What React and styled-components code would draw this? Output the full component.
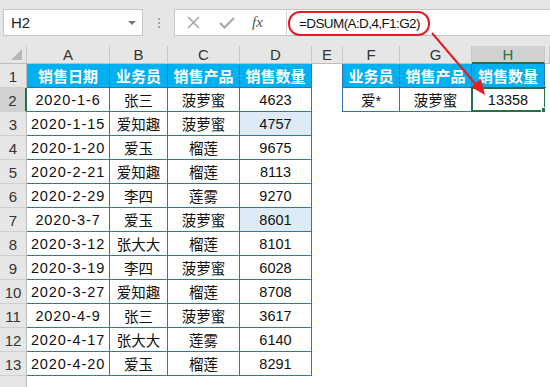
import styled, { createGlobalStyle } from "styled-components";

const GlobalStyle = createGlobalStyle`
  body {
    margin: 0;
    background: #ffffff;
    font-family: "Liberation Sans", "Noto Sans CJK SC", sans-serif;
  }
`;

const BLUE = "#2e75b6";
const GREEN = "#217346";

const Sheet = styled.div`
  position: relative;
  width: 550px;
  height: 387px;
  overflow: hidden;
  background: #ffffff;
`;

const Toolbar = styled.div`
  height: 46px;
  box-sizing: border-box;
  padding: 9px 0 0 3px;
  display: flex;
  align-items: flex-start;
  background: #e6e6e6;
`;

const NameBox = styled.div`
  width: 140px;
  height: 27px;
  box-sizing: border-box;
  border: 1px solid #c6c6c6;
  background: #fff;
  display: flex;
  align-items: center;
  justify-content: space-between;
  padding: 0 6px 0 7px;
  font-size: 15px;
  color: #222;
`;

const DropArrow = styled.span`
  width: 0;
  height: 0;
  border-left: 4px solid transparent;
  border-right: 4px solid transparent;
  border-top: 4px solid #777;
`;

const Dots = styled.div`
  width: 31px;
  height: 27px;
  display: flex;
  flex-direction: column;
  align-items: center;
  justify-content: center;
  gap: 2px;

  span {
    width: 2px;
    height: 2px;
    background: #a6a6a6;
  }
`;

const FormulaBox = styled.div`
  flex: 1;
  height: 27px;
  box-sizing: border-box;
  border: 1px solid #c6c6c6;
  border-right: none;
  background: #fff;
  display: flex;
  align-items: center;
`;

const FxButtons = styled.div`
  width: 112px;
  height: 100%;
  box-sizing: border-box;
  border-right: 1px solid #d4d4d4;
  display: flex;
  align-items: center;
  padding-left: 12px;
  gap: 19px;
  color: #a8a8a8;
`;

const FxLabel = styled.span`
  font-family: "Liberation Serif", serif;
  font-style: italic;
  font-size: 15px;
  color: #555;
  margin-left: -2px;
`;

const Formula = styled.span`
  margin: 2px 0 0 1px;
  height: 25px;
  width: 142px;
  box-sizing: border-box;
  border: 2px solid #e51c23;
  border-radius: 12px;
  padding-left: 9px;
  display: flex;
  align-items: center;
  font-size: 13.5px;
  letter-spacing: -0.6px;
  white-space: nowrap;
  color: #111;
`;

const Grid = styled.div`
  display: grid;
  grid-template-columns: 27px 83px 58px 72px 72px 31px 57px 72px 73px 1fr;
  grid-template-rows: 18px repeat(13, 24px) 24px;
`;

const ColHead = styled.div`
  box-sizing: border-box;
  background: ${(p) => (p.$active ? "#d2d2d2" : "#e6e6e6")};
  border-right: 1px solid #c8c8c8;
  border-bottom: ${(p) => (p.$active ? `2px solid ${GREEN}` : "1px solid #bdbdbd")};
  color: ${(p) => (p.$active ? GREEN : "#333")};
  font-size: 15px;
  display: flex;
  align-items: center;
  justify-content: center;
  padding-top: ${(p) => (p.$active ? "1px" : "0")};
`;

const Corner = styled.div`
  box-sizing: border-box;
  background: #e6e6e6;
  border-right: 1px solid #c8c8c8;
  border-bottom: 1px solid #bdbdbd;
  display: flex;
  align-items: flex-end;
  justify-content: flex-end;
  padding: 0 4px 3px 0;

  span {
    width: 0;
    height: 0;
    border-left: 11px solid transparent;
    border-bottom: 11px solid #b7b7b7;
  }
`;

const RowHead = styled.div`
  box-sizing: border-box;
  background: ${(p) => (p.$active ? "#d2d2d2" : "#e6e6e6")};
  border-right: ${(p) => (p.$active ? `2px solid ${GREEN}` : "1px solid #bdbdbd")};
  border-bottom: 1px solid #cfcfcf;
  color: #333;
  font-size: 15px;
  display: flex;
  align-items: flex-end;
  justify-content: center;
  padding-bottom: 2px;
`;

const Cell = styled.div`
  position: relative;
  box-sizing: border-box;
  display: flex;
  align-items: center;
  justify-content: center;
  font-size: ${(p) => (p.$head ? "15px" : "14.5px")};
  font-weight: ${(p) => (p.$head ? 700 : 400)};
  letter-spacing: ${(p) => (p.$date ? "0.9px" : "0")};
  color: ${(p) => (p.$head ? "#fff" : "#111")};
  background: ${(p) => (p.$head ? "#00b0f0" : p.$hl ? "#ddebf7" : "#fff")};
  border-right: ${(p) => (p.$boxed || p.$edge ? `1px solid ${BLUE}` : "none")};
  border-bottom: ${(p) => (p.$boxed ? `1px solid ${BLUE}` : "none")};
`;

const Selection = styled.div`
  position: absolute;
  left: -1px;
  top: -1px;
  right: -2px;
  bottom: -1px;
  border: 2px solid ${GREEN};

  &::after {
    content: "";
    position: absolute;
    right: -4px;
    bottom: -4px;
    width: 5px;
    height: 5px;
    background: ${GREEN};
    border: 1px solid #fff;
  }
`;

const Arrow = styled.svg`
  position: absolute;
  left: 0;
  top: 0;
  pointer-events: none;
`;

const rows = [
  ["2020-1-6", "张三", "菠萝蜜", 4623],
  ["2020-1-15", "爱知趣", "菠萝蜜", 4757, true],
  ["2020-1-20", "爱玉", "榴莲", 9675],
  ["2020-2-21", "爱知趣", "榴莲", 8113],
  ["2020-2-29", "李四", "莲雾", 9270],
  ["2020-3-7", "爱玉", "菠萝蜜", 8601, true],
  ["2020-3-12", "张大大", "榴莲", 8101],
  ["2020-3-19", "李四", "菠萝蜜", 6028],
  ["2020-3-27", "爱知趣", "榴莲", 8708],
  ["2020-4-9", "张三", "菠萝蜜", 3617],
  ["2020-4-17", "张大大", "莲雾", 6140],
  ["2020-4-20", "爱玉", "榴莲", 8291],
];

const cols = ["A", "B", "C", "D", "E", "F", "G", "H"];

const App = () => {
  return (
    <Sheet>
      <GlobalStyle />
      <Toolbar>
        <NameBox>
          H2
          <DropArrow />
        </NameBox>
        <Dots>
          <span />
          <span />
          <span />
        </Dots>
        <FormulaBox>
          <FxButtons>
            <svg width="13" height="13" viewBox="0 0 13 13">
              <path d="M1 1 L12 12 M12 1 L1 12" stroke="#a8a8a8" strokeWidth="1.6" />
            </svg>
            <svg width="16" height="13" viewBox="0 0 16 13">
              <path d="M1 7 L5.5 11.5 L15 2" stroke="#a8a8a8" strokeWidth="2.2" fill="none" />
            </svg>
            <FxLabel>fx</FxLabel>
          </FxButtons>
          <Formula>=DSUM(A:D,4,F1:G2)</Formula>
        </FormulaBox>
      </Toolbar>

      <Grid>
        <Corner>
          <span />
        </Corner>
        {cols.map((c) => (
          <ColHead key={c} $active={c === "H"}>
            {c}
          </ColHead>
        ))}
        <ColHead />

        {/* row 1 */}
        <RowHead>1</RowHead>
        <Cell $head $boxed>销售日期</Cell>
        <Cell $head $boxed>业务员</Cell>
        <Cell $head $boxed>销售产品</Cell>
        <Cell $head $boxed>销售数量</Cell>
        <Cell $edge />
        <Cell $head $boxed>业务员</Cell>
        <Cell $head $boxed>销售产品</Cell>
        <Cell $head $boxed>销售数量</Cell>
        <Cell />

        {rows.map((r, i) => {
          const n = i + 2;
          return [
            <RowHead key={`h${n}`} $active={n === 2}>
              {n}
            </RowHead>,
            <Cell key={`a${n}`} $boxed $date>{r[0]}</Cell>,
            <Cell key={`b${n}`} $boxed>{r[1]}</Cell>,
            <Cell key={`c${n}`} $boxed>{r[2]}</Cell>,
            <Cell key={`d${n}`} $boxed $hl={r[4]}>{r[3]}</Cell>,
            <Cell key={`e${n}`} $edge={n === 2} />,
            n === 2 ? (
              [
                <Cell key="f2" $boxed>爱*</Cell>,
                <Cell key="g2" $boxed>菠萝蜜</Cell>,
                <Cell key="h2" $boxed>
                  13358
                  <Selection />
                </Cell>,
              ]
            ) : (
              [<Cell key={`f${n}`} />, <Cell key={`g${n}`} />, <Cell key={`hh${n}`} />]
            ),
            <Cell key={`x${n}`} />,
          ];
        })}

        <RowHead />
      </Grid>

      <Arrow width="550" height="387">
        <line x1="432" y1="33" x2="478" y2="87" stroke="#e51c23" strokeWidth="2" />
        <polygon points="485,95 471,87 481,79" fill="#e51c23" />
      </Arrow>
    </Sheet>
  );
};

export default App;
